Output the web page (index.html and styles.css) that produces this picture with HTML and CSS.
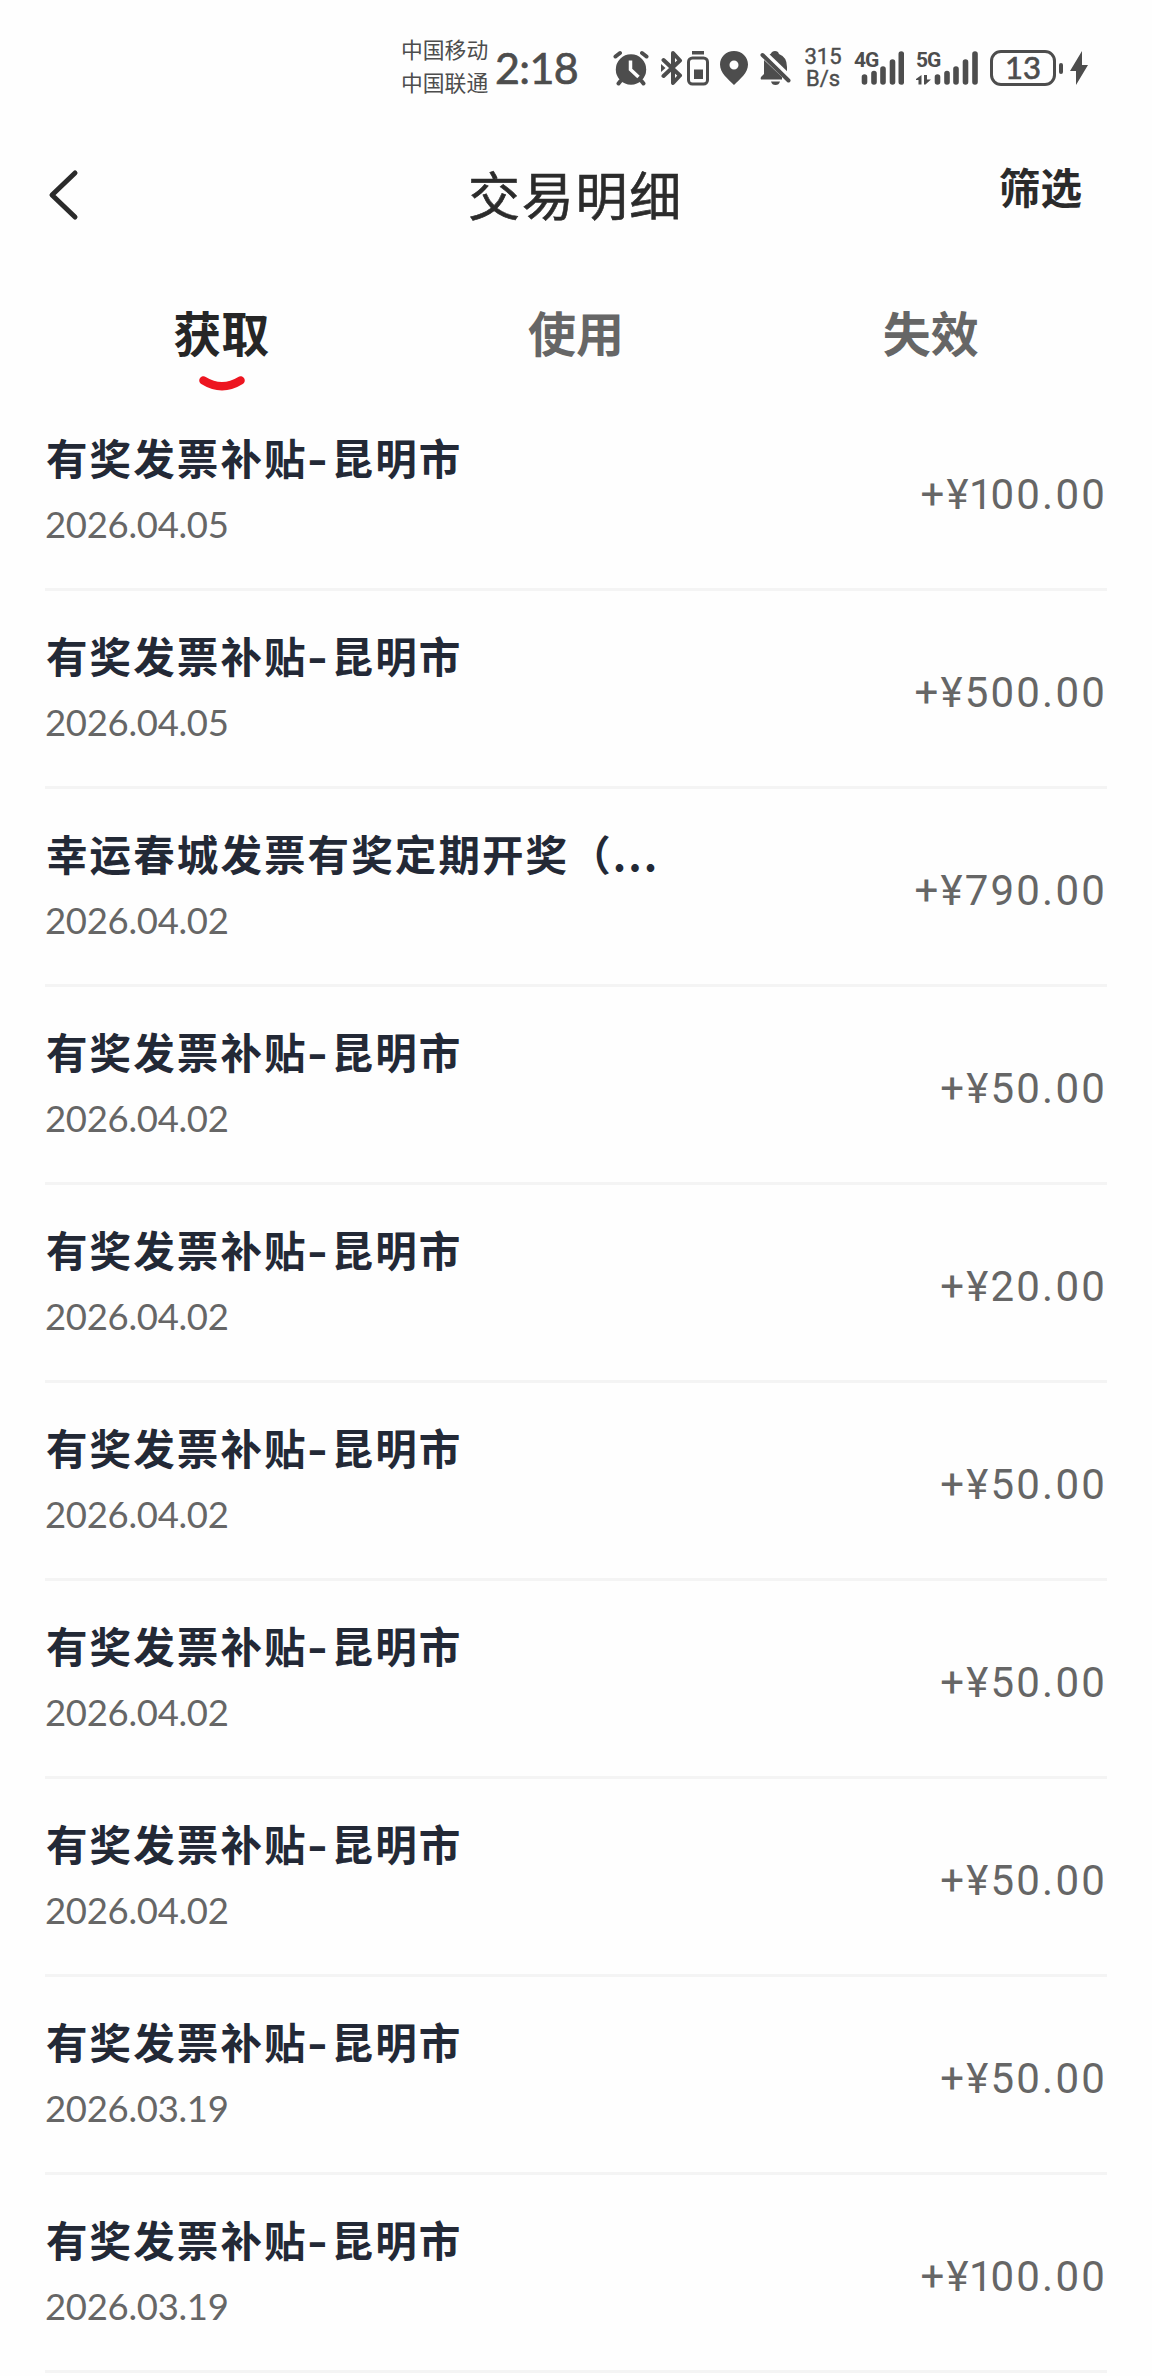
FILE: index.html
```html
<!DOCTYPE html>
<html lang="zh-CN">
<head>
    <meta charset="UTF-8">
    <title>交易明细</title>
    <link rel="stylesheet" href="styles.css">
</head>
<body>
    <div class="status-bar">
        <div class="carriers">
            <span>中国移动</span>
            <span>中国联通</span>
        </div>
        <span class="time">2:18</span>
        <svg class="icon alarm" width="36" height="36" viewBox="0 0 36 36">
            <circle cx="18" cy="19.500" r="15.200"/>
            <path class="line" d="M2.500 6.500L7 3M33.500 6.500L29 3M7.500 31L5.500 33.500M28.500 31L30.500 33.500"/>
            <path class="cut" d="M17.500 10.500V19.500L25.500 27"/>
        </svg>
        <svg class="icon bluetooth" width="22" height="36" viewBox="0 0 22 36">
            <path class="line" d="M2.500 10L19 25.500L12 33V3L19 10.500L2.500 26"/>
            <path d="M0 14L4.500 18L0 22z"/>
        </svg>
        <svg class="icon device-battery" width="22" height="36" viewBox="0 0 22 36">
            <path d="M5 1H17V4.500H5zM7 19.500H16V29H7z"/>
            <rect class="line thin" x="1.500" y="8" width="19" height="26" rx="4"/>
        </svg>
        <svg class="icon pin" width="28" height="36" viewBox="0 0 28 36">
            <path fill-rule="evenodd" d="M14 1C6 1 0 7 0 14.500C0 23 8 29 14 35C20 29 28 23 28 14.500C28 7 22 1 14 1zM14 10.500a4.500 4.500 0 1 1 0 9a4.500 4.500 0 1 1 0-9z"/>
        </svg>
        <svg class="icon bell" width="31" height="36" viewBox="0 0 31 36">
            <path d="M9 5Q11 4 12 2Q15 0 18 2L19 4Q27 7 27 17V22L20 18zM4 10L22 27V29.500H1Q0 27.500 2 26L4 24zM11 31.500H20Q19 35 15.500 35Q12 35 11 31.500z"/>
            <path class="cut wide" d="M5 2L31 27"/>
            <path class="line" d="M2.500 5L28.500 30.500"/>
        </svg>
        <div class="speed">
            <span>315</span>
            <span>B/s</span>
        </div>
        <div class="signal signal-4g">
            <span class="network">4G</span>
            <svg class="icon" width="50" height="36" viewBox="0 0 50 36">
                <path class="bars" d="M10.500 27V32M20 23.500V32M29 19V32M38.500 12V32M47.300 4V32"/>
            </svg>
        </div>
        <div class="signal signal-5g">
            <span class="network">5G</span>
            <svg class="icon" width="62" height="36" viewBox="0 0 62 36">
                <path d="M0 29L5.500 25V34.500H2.500V30H0zM8 25H11V29.500H15L9.500 34.500H8z"/>
                <path class="bars" d="M21.500 27V32M31 23.500V32M40 19V32M49.500 12V32M59 4V32"/>
            </svg>
        </div>
        <div class="battery">13</div>
        <i class="battery-nub"></i>
        <svg class="icon bolt" width="18" height="36" viewBox="0 0 18 36">
            <path d="M12 1V15H18L6 35V21H0z"/>
        </svg>
    </div>

    <div class="header">
        <svg class="back" width="32" height="52" viewBox="0 0 32 52">
            <path d="M28 4L5 26L28 48"/>
        </svg>
        <h1>交易明细</h1>
        <a class="filter">筛选</a>
    </div>

    <div class="tabs">
        <div class="tab active">
            获取
            <svg width="46" height="17" viewBox="0 0 46 17">
                <path d="M4.500 4.500Q23 16 41.500 4.500"/>
            </svg>
        </div>
        <div class="tab">使用</div>
        <div class="tab">失效</div>
    </div>

    <ul class="list">
        <li>
            <div>
                <div class="name">有奖发票补贴<span class="dash">-</span>昆明市</div>
                <div class="date">2026.04.05</div>
            </div>
            <span class="amount">+¥<span class="one">1</span>00.00</span>
        </li>
        <li>
            <div>
                <div class="name">有奖发票补贴<span class="dash">-</span>昆明市</div>
                <div class="date">2026.04.05</div>
            </div>
            <span class="amount">+¥500.00</span>
        </li>
        <li>
            <div>
                <div class="name">幸运春城发票有奖定期开奖（<span class="more">...</span></div>
                <div class="date">2026.04.02</div>
            </div>
            <span class="amount">+¥790.00</span>
        </li>
        <li>
            <div>
                <div class="name">有奖发票补贴<span class="dash">-</span>昆明市</div>
                <div class="date">2026.04.02</div>
            </div>
            <span class="amount">+¥50.00</span>
        </li>
        <li>
            <div>
                <div class="name">有奖发票补贴<span class="dash">-</span>昆明市</div>
                <div class="date">2026.04.02</div>
            </div>
            <span class="amount">+¥20.00</span>
        </li>
        <li>
            <div>
                <div class="name">有奖发票补贴<span class="dash">-</span>昆明市</div>
                <div class="date">2026.04.02</div>
            </div>
            <span class="amount">+¥50.00</span>
        </li>
        <li>
            <div>
                <div class="name">有奖发票补贴<span class="dash">-</span>昆明市</div>
                <div class="date">2026.04.02</div>
            </div>
            <span class="amount">+¥50.00</span>
        </li>
        <li>
            <div>
                <div class="name">有奖发票补贴<span class="dash">-</span>昆明市</div>
                <div class="date">2026.04.02</div>
            </div>
            <span class="amount">+¥50.00</span>
        </li>
        <li>
            <div>
                <div class="name">有奖发票补贴<span class="dash">-</span>昆明市</div>
                <div class="date">2026.03.19</div>
            </div>
            <span class="amount">+¥50.00</span>
        </li>
        <li>
            <div>
                <div class="name">有奖发票补贴<span class="dash">-</span>昆明市</div>
                <div class="date">2026.03.19</div>
            </div>
            <span class="amount">+¥<span class="one">1</span>00.00</span>
        </li>
    </ul>
</body>
</html>
```
FILE: styles.css
```css
* {
    box-sizing: border-box;
}

body {
    margin: 0;
    height: 2376px;
    overflow: hidden;
    background-color: #fefefe;
    font-family: "Noto Sans CJK SC", sans-serif;
    color: #2b2b2b;
}

/* status bar */
.status-bar {
    display: flex;
    align-items: center;
    height: 136px;
    padding-left: 401px;
    color: #4d4d4d;
    white-space: nowrap;
}
.carriers {
    display: flex;
    flex-direction: column;
    width: 94px;
    margin-bottom: 6px;
    font-size: 21.8px;
    line-height: 33px;
}
.time {
    width: 118px;
    font-family: Lato, sans-serif;
    font-size: 43px;
    line-height: 52px;
    letter-spacing: -0.6px;
    -webkit-text-stroke: 0.7px #4d4d4d;
}
.icon {
    display: block;
    flex: none;
    fill: #4d4d4d;
}
.icon .line {
    fill: none;
    stroke: #4d4d4d;
    stroke-width: 4;
    stroke-linecap: round;
    stroke-linejoin: round;
}
.icon .thin {
    stroke-width: 3;
}
.icon .cut {
    fill: none;
    stroke: #fefefe;
    stroke-width: 3.5;
}
.icon .wide {
    stroke-width: 3;
}
.icon .bars {
    fill: none;
    stroke: #4d4d4d;
    stroke-width: 5.6;
    stroke-linecap: round;
}
.bluetooth {
    margin-left: 12px;
}
.device-battery {
    margin-left: 4px;
}
.pin {
    margin-left: 11px;
}
.bell {
    margin-left: 12px;
}
.speed {
    display: flex;
    flex-direction: column;
    width: 38px;
    margin-left: 13px;
    font-family: Roboto, sans-serif;
    font-size: 22px;
    line-height: 22px;
    text-align: center;
    -webkit-text-stroke: 0.4px #4d4d4d;
}
.signal {
    position: relative;
}
.signal-4g {
    margin-left: 12px;
}
.signal-5g {
    margin-left: 12px;
}
.network {
    position: absolute;
    left: 0;
    top: 0;
    font-family: Roboto, sans-serif;
    font-size: 21px;
    font-weight: 700;
    line-height: 20px;
    letter-spacing: -1px;
}
.battery {
    width: 66px;
    height: 36px;
    margin-left: 12px;
    border: 3px solid #4d4d4d;
    border-radius: 11px;
    font-family: Lato, sans-serif;
    font-size: 31px;
    line-height: 29px;
    text-align: center;
    -webkit-text-stroke: 0.7px #4d4d4d;
}
.battery-nub {
    width: 4px;
    height: 11px;
    margin-left: 3px;
    border-radius: 2px;
    background-color: #4d4d4d;
}
.bolt {
    margin-left: 7px;
}

/* header */
.header {
    display: grid;
    grid-template-columns: 1fr auto 1fr;
    align-items: center;
    height: 120px;
    padding: 0 70px 0 47px;
}
.back {
    margin-bottom: 2px;
}
.back path {
    fill: none;
    stroke: #2b2b2b;
    stroke-width: 5;
    stroke-linecap: round;
    stroke-linejoin: round;
}
h1 {
    margin: 0 0 6px 22px;
    font-size: 52px;
    font-weight: 400;
    letter-spacing: 1.7px;
    -webkit-text-stroke: 0.6px #2b2b2b;
}
.filter {
    justify-self: end;
    margin-bottom: 20px;
    font-size: 41.5px;
    font-weight: 700;
}

/* tabs */
.tabs {
    display: flex;
    height: 144px;
    padding: 40px 44px 0;
}
.tab {
    display: flex;
    flex: 1;
    flex-direction: column;
    align-items: center;
    font-size: 48px;
    font-weight: 700;
    line-height: 70px;
    color: #666;
}
.active {
    color: #262626;
}
.tab svg {
    margin: 10px 0 0 2px;
}
.tab path {
    fill: none;
    stroke: #ed1520;
    stroke-width: 8.5;
    stroke-linecap: round;
}

/* records */
.list {
    margin: 0;
    padding: 0 45px;
    list-style: none;
}
.list li {
    display: flex;
    justify-content: space-between;
    height: 198px;
    padding-top: 27px;
    border-bottom: 3px solid #f4f4f4;
}
.list li:first-child {
    height: 191px;
    padding-top: 20px;
}
.name {
    padding-left: 1px;
    font-size: 41.5px;
    font-weight: 700;
    line-height: 74px;
    letter-spacing: 2.1px;
    color: #232936;
    white-space: nowrap;
}
.dash {
    display: inline-block;
    width: 24px;
    font-family: Inter, sans-serif;
    line-height: 40px;
    transform: scaleX(1.1);
}
.more {
    letter-spacing: 2px;
}
.date {
    padding-top: 1px;
    font-family: Lato, sans-serif;
    font-size: 36.5px;
    line-height: 58px;
    letter-spacing: -0.3px;
    color: #666;
}
.amount {
    padding-top: 50px;
    font-family: Roboto, sans-serif;
    font-size: 42px;
    line-height: 50px;
    letter-spacing: 2.2px;
    color: #666;
}
.one {
    margin-left: -2px;
    letter-spacing: -2px;
}
```
